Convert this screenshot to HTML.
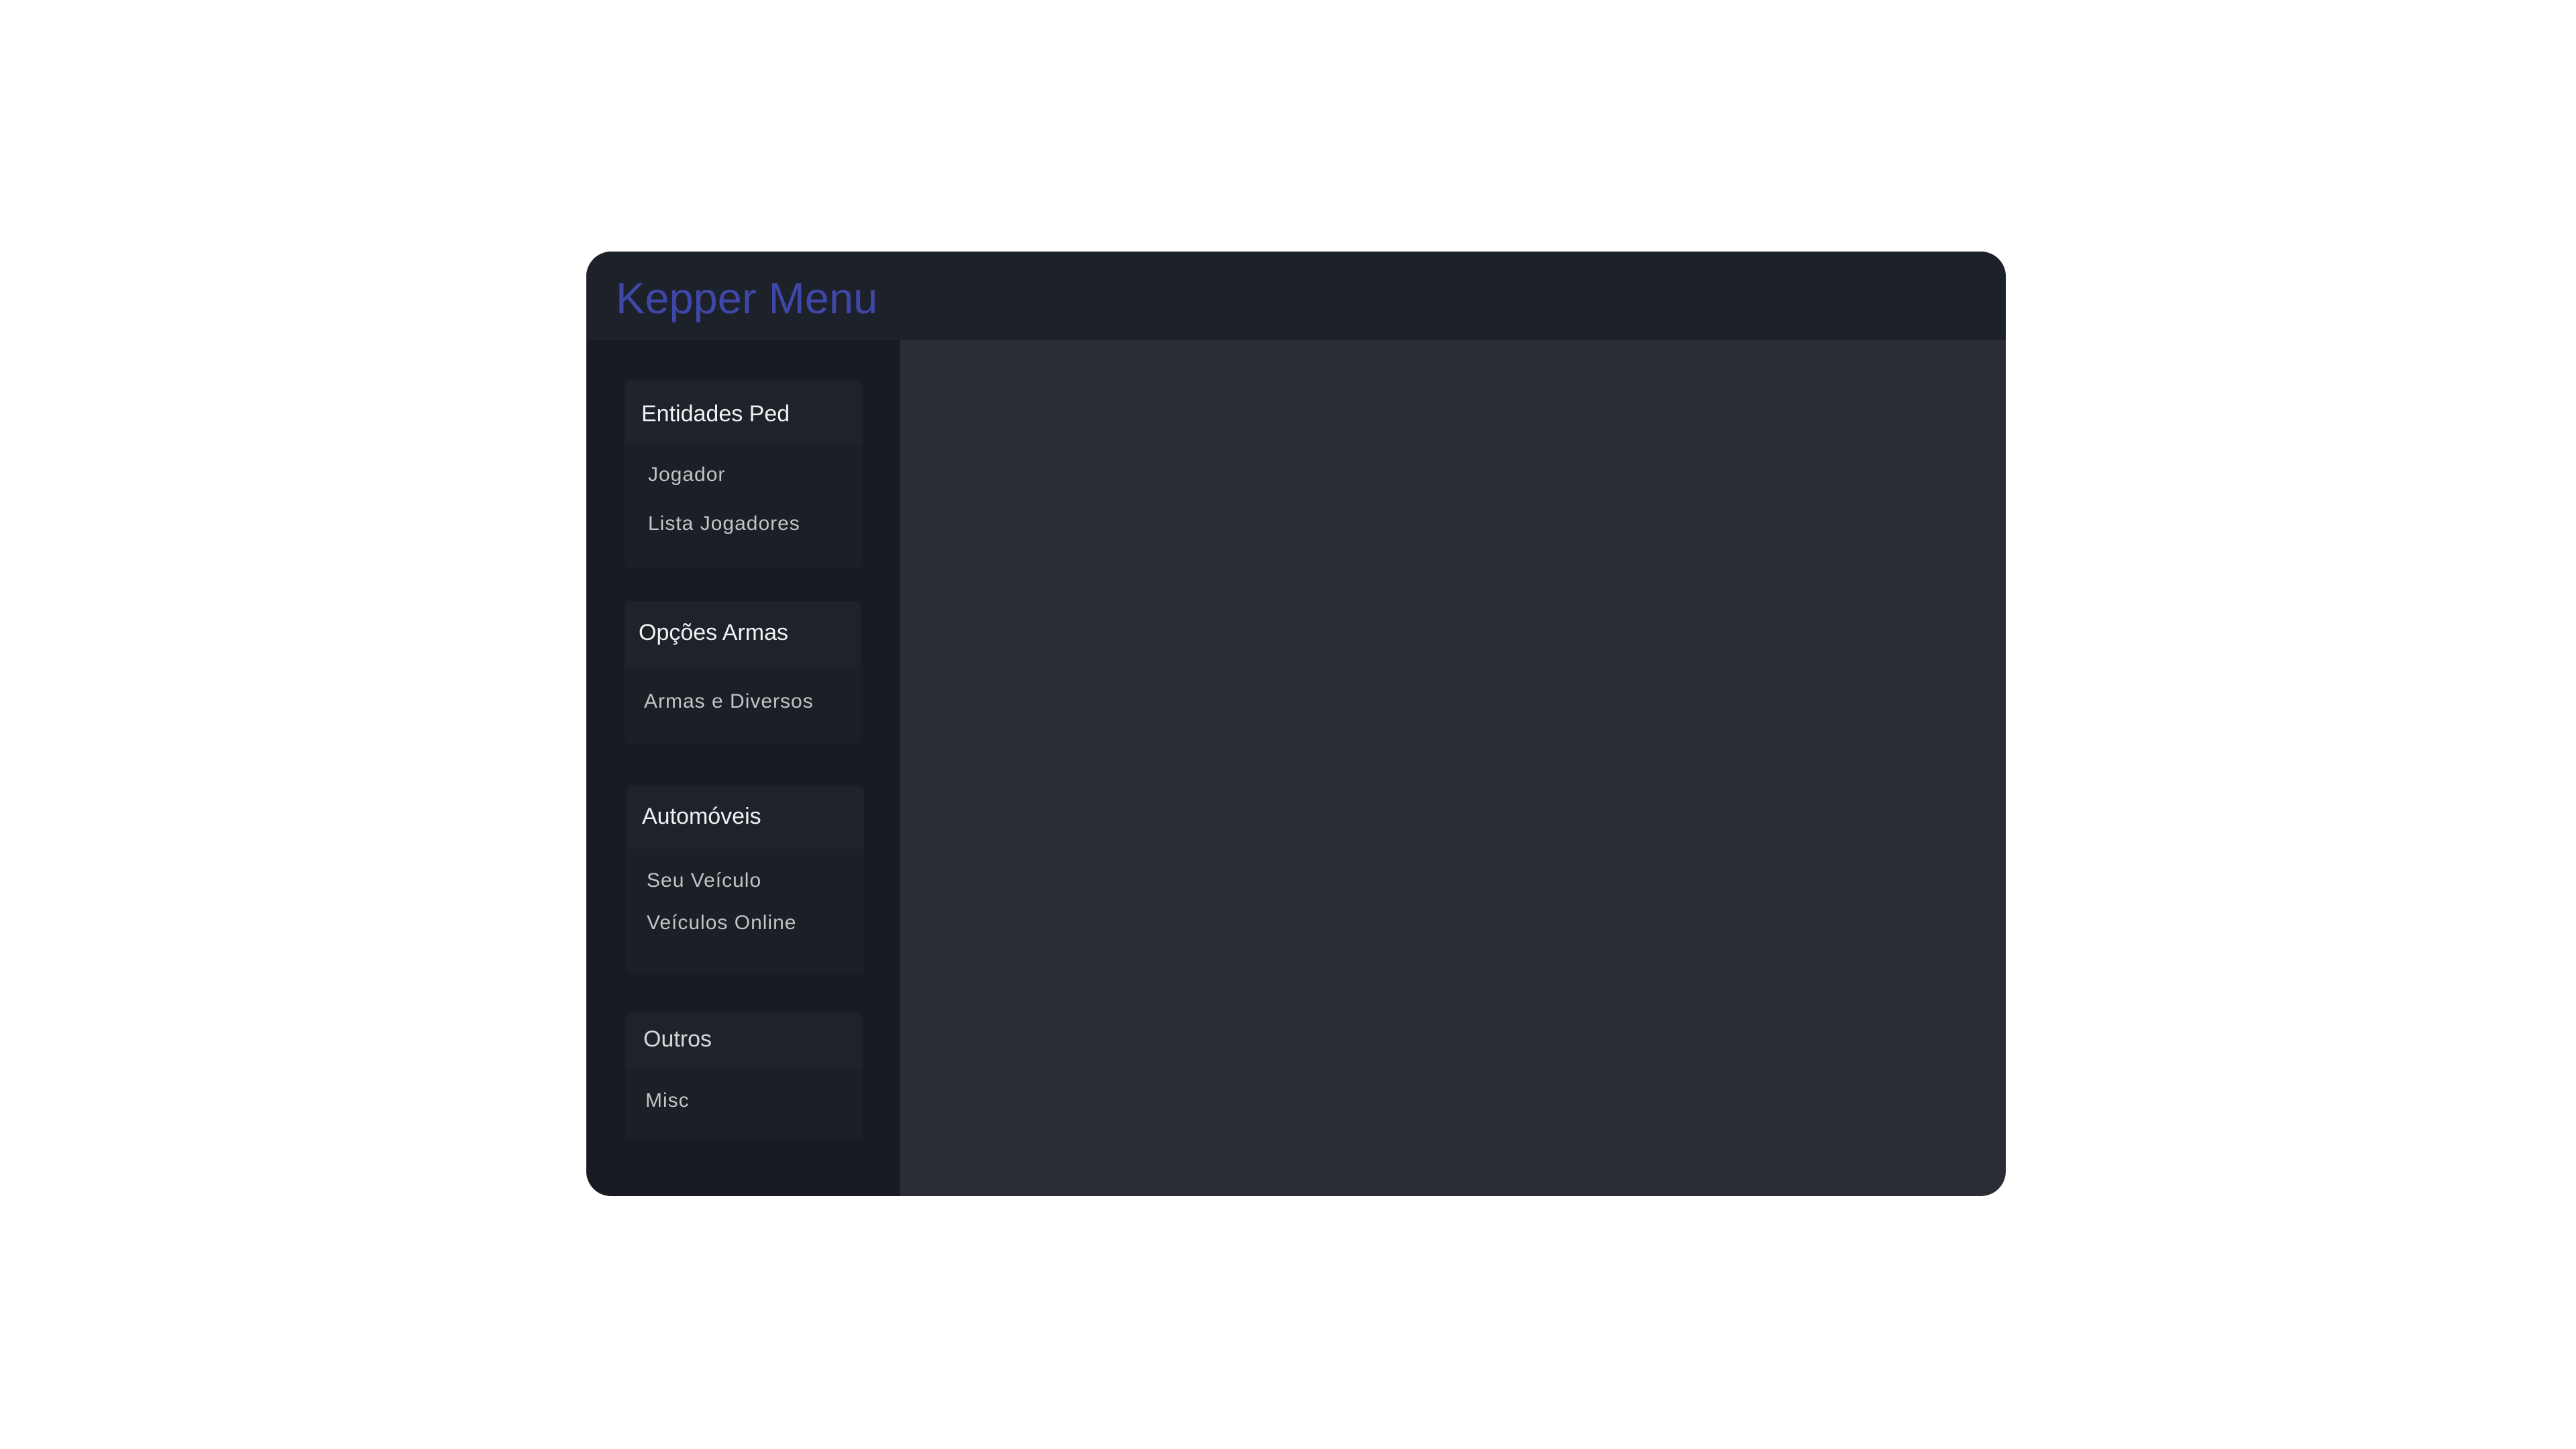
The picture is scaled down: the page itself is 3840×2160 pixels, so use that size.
<!DOCTYPE html>
<html><head><meta charset="utf-8"><style>
html,body{margin:0;padding:0;background:#fff;width:3840px;height:2160px;overflow:hidden;font-family:"Liberation Sans",sans-serif;}
.abs{position:absolute;}
#panel{left:874px;top:375px;width:2116px;height:1408px;border-radius:37px;overflow:hidden;background:#2a2d33;}
#head{left:0;top:0;width:2116px;height:132px;background:#1d2129;}
#side{left:0;top:132px;width:468px;height:1276px;background:#181b22;}
.t{position:absolute;white-space:nowrap;line-height:1;}
.title{font-size:65px;color:#3f48a8;}
.h{font-size:34px;color:#f2f2f2;}
.i{font-size:30px;color:#c4c4c6;letter-spacing:1px;}
.box{position:absolute;background:#1b1f26;border-radius:10px;overflow:hidden;}
.bh{position:absolute;left:0;top:0;width:100%;background:#1e222b;}
</style></head><body>
<div id="panel" class="abs">
  <div id="head" class="abs"></div>
  <div id="side" class="abs"></div>
</div>
<div class="t title" style="left:918px;top:412px;">Kepper Menu</div>

<div class="box" style="left:931px;top:566px;width:355px;height:281px;"><div class="bh" style="height:95px;"></div></div>
<div class="t h" style="left:956px;top:600px;">Entidades Ped</div>
<div class="t i" style="left:966px;top:693px;">Jogador</div>
<div class="t i" style="left:966px;top:766px;">Lista Jogadores</div>

<div class="box" style="left:931px;top:896px;width:352px;height:213px;"><div class="bh" style="height:97px;"></div></div>
<div class="t h" style="left:952px;top:926px;">Opções Armas</div>
<div class="t i" style="left:960px;top:1031px;">Armas e Diversos</div>

<div class="box" style="left:933px;top:1171px;width:355px;height:281px;"><div class="bh" style="height:95px;"></div></div>
<div class="t h" style="left:957px;top:1200px;">Automóveis</div>
<div class="t i" style="left:964px;top:1298px;">Seu Veículo</div>
<div class="t i" style="left:964px;top:1361px;">Veículos Online</div>

<div class="box" style="left:932px;top:1508px;width:354px;height:190px;"><div class="bh" style="height:86px;"></div></div>
<div class="t h" style="left:959px;top:1532px;color:#d6d6d6;">Outros</div>
<div class="t i" style="left:962px;top:1626px;">Misc</div>
</body></html>
